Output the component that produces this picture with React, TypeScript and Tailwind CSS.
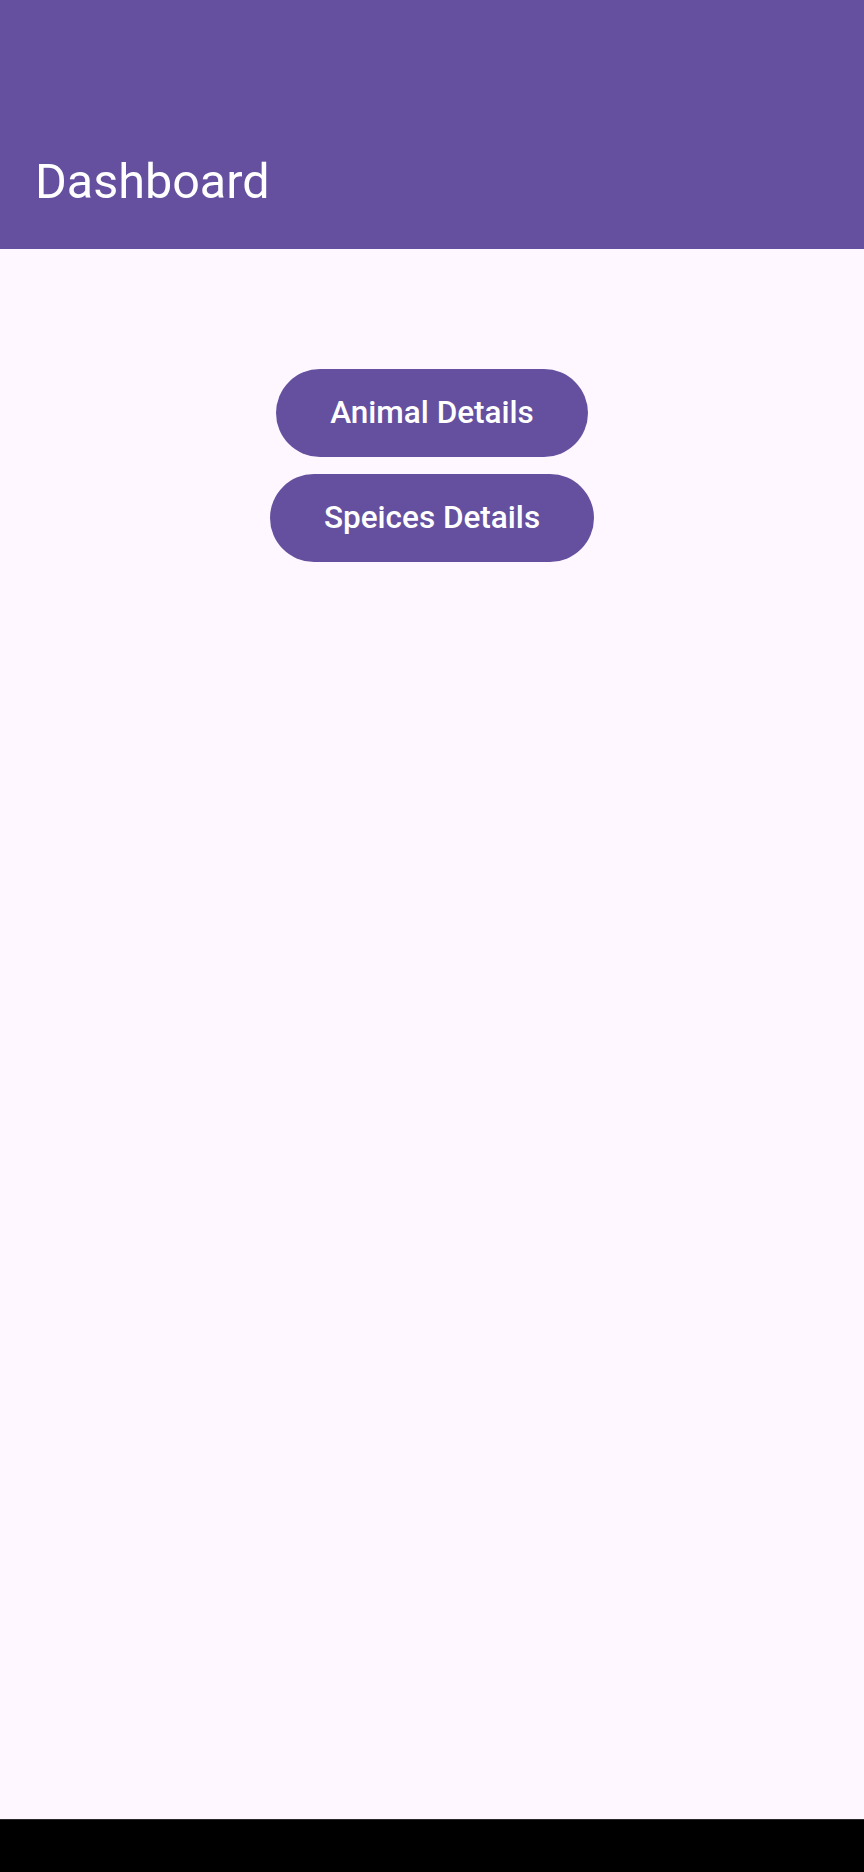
import React from "react";

export default function App() {
  return (
    <div
      className="flex h-[1872px] w-full flex-col bg-[#fef7ff]"
      style={{ fontFamily: "Roboto, 'Noto Sans', sans-serif" }}
    >
      <header className="h-[249px] w-full shrink-0 bg-[#6550a0] pl-[35px] pt-[153px]">
        <h1 className="text-[48.5px] font-normal leading-[57px] text-white">Dashboard</h1>
      </header>
      <main className="flex flex-1 flex-col items-center gap-[17px] pt-[120px]">
        <button className="flex h-[88px] items-center justify-center rounded-full bg-[#6550a0] px-[54px] text-[31.5px] font-medium text-white">
          Animal Details
        </button>
        <button className="flex h-[88px] items-center justify-center rounded-full bg-[#6550a0] px-[54px] text-[31.5px] font-medium text-white">
          Speices Details
        </button>
      </main>
      <div className="h-[53px] w-full shrink-0 border-t border-[#2a2a2a] bg-black" />
    </div>
  );
}
